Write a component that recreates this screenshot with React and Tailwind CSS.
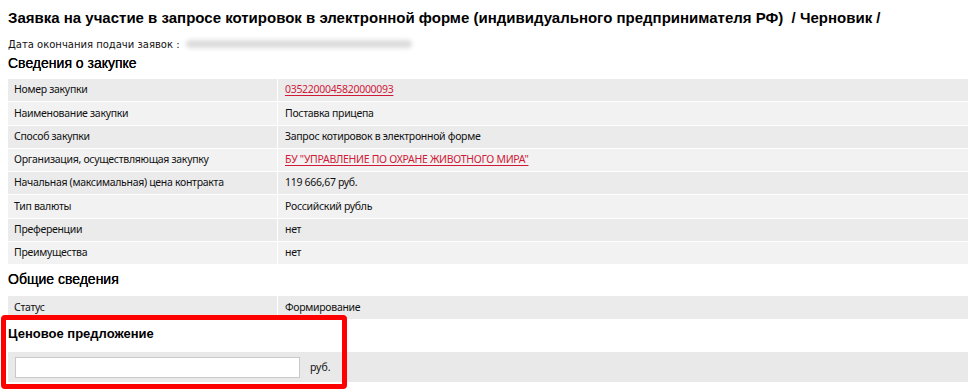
export default function App() {
  const rows = [
    ["Номер закупки", "0352200045820000093", true],
    ["Наименование закупки", "Поставка прицепа"],
    ["Способ закупки", "Запрос котировок в электронной форме"],
    ["Организация, осуществляющая закупку", 'БУ "УПРАВЛЕНИЕ ПО ОХРАНЕ ЖИВОТНОГО МИРА"', true],
    ["Начальная (максимальная) цена контракта", "119 666,67 руб."],
    ["Тип валюты", "Российский рубль"],
    ["Преференции", "нет"],
    ["Преимущества", "нет"],
  ];

  return (
    <div className="relative w-[970px] h-[389px] overflow-hidden bg-white font-['Noto_Sans',sans-serif] text-[#111]">
      <div className="pl-2 pr-[2px]">
        <h1 className="pt-[9px] h-[30px] text-[15px] leading-[18px] font-bold font-['Liberation_Sans',Arial,sans-serif] text-black whitespace-pre">
          {"Заявка на участие в запросе котировок в электронной форме (индивидуального предпринимателя РФ)  / Черновик /"}
        </h1>
        <div className="flex items-center h-[14px] mt-[7px] text-[10px] font-['DejaVu_Sans',sans-serif]">
          <span>Дата окончания подачи заявок :</span>
          <span className="ml-[6px] w-[226px] h-[8px] rounded-full bg-[#dcdcdc] blur-[2px]" />
        </div>
        <h2 className="mt-[2px] h-[21px] leading-[21px] text-[14px] font-['Liberation_Sans',Arial,sans-serif] text-black [text-shadow:0_0_0.3px_#000]">
          Сведения о закупке
        </h2>
        <div className="mt-[5px] text-[10.5px] tracking-[-0.3px]">
          {rows.map(([label, value, link], i) => (
            <div
              key={label}
              className={`flex h-[23.3px] border-b border-white ${i % 2 === 0 ? "bg-[#ebebeb]" : "bg-[#f1f2f1]"}`}
            >
              <div className="w-[270px] shrink-0 flex items-center pl-[6px] border-r border-white">{label}</div>
              <div className="flex-1 flex items-center pl-[7px]">
                {link ? (
                  <a className="text-[#d01a3a] underline underline-offset-[2px]">{value}</a>
                ) : (
                  value
                )}
              </div>
            </div>
          ))}
        </div>
        <h2 className="mt-[2px] h-[24px] leading-[24px] text-[14px] font-['Liberation_Sans',Arial,sans-serif] text-black [text-shadow:0_0_0.3px_#000]">
          Общие сведения
        </h2>
        <div className="mt-[5px] flex h-[23px] bg-[#ebebeb] text-[10.5px] tracking-[-0.3px]">
          <div className="w-[270px] shrink-0 flex items-center pl-[6px] border-r border-white">Статус</div>
          <div className="flex-1 flex items-center pl-[7px]">Формирование</div>
        </div>
        <h2 className="mt-[3px] h-[24px] leading-[24px] text-[13px] font-bold font-['Liberation_Sans',Arial,sans-serif] text-black">
          Ценовое предложение
        </h2>
        <div className="mt-[6px] flex items-center h-[30px] bg-[#e9e9e9] text-[10.5px]">
          <input className="ml-[7px] w-[285px] h-[21px] bg-white border border-[#c9c9c9] outline-none" />
          <span className="ml-[10px]">руб.</span>
        </div>
      </div>
      <div className="absolute left-[1px] top-[315px] w-[346px] h-[74px] border-[5px] border-[#ff0000] rounded-[4px] pointer-events-none" />
    </div>
  );
}
